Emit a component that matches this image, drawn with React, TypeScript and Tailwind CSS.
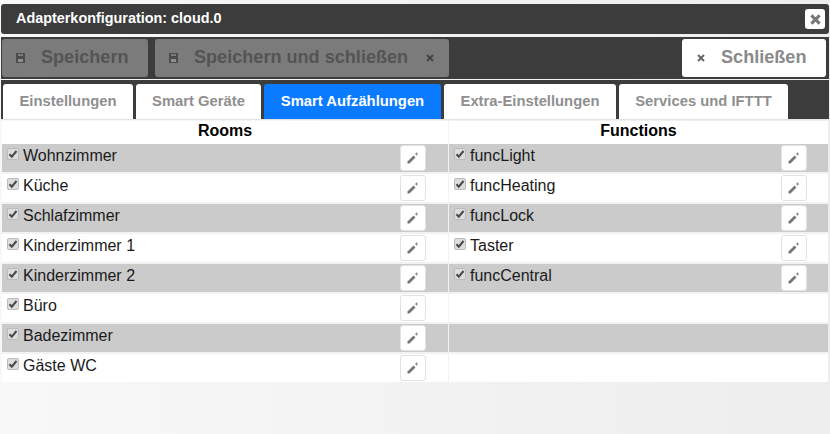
import React from 'react';

const rooms = ['Wohnzimmer', 'Küche', 'Schlafzimmer', 'Kinderzimmer 1', 'Kinderzimmer 2', 'Büro', 'Badezimmer', 'Gäste WC'];
const functions = ['funcLight', 'funcHeating', 'funcLock', 'Taster', 'funcCentral', '', '', ''];
const tabs = ['Einstellungen', 'Smart Geräte', 'Smart Aufzählungen', 'Extra-Einstellungen', 'Services und IFTTT'];
const tabWidths = ['w-[130px]', 'w-[125px]', 'w-[177px]', 'w-[172px]', 'w-[169px]'];

const SaveIcon = () => (
  <svg width="9" height="10" viewBox="0 0 9 10" className="shrink-0">
    <path fill="#4c4c4c" d="M0 0h9v10H0z" />
    <path fill="#7b7b7b" d="M2 1h5v2H2z" />
    <path fill="#8f8f8f" d="M2 6h5v3H2z" />
  </svg>
);

const CloseIcon = ({ size = 8, color = '#555', weight = 2 }: { size?: number; color?: string; weight?: number }) => (
  <svg width={size} height={size} viewBox="0 0 8 8" className="shrink-0">
    <path d="M1 1l6 6M7 1L1 7" stroke={color} strokeWidth={weight} />
  </svg>
);

const PencilIcon = () => (
  <svg width="12" height="12" viewBox="0 0 12 12">
    <path d="M0.500 9.500l6-6 2 2-6 6H0.500z" fill="#777" />
    <path d="M9.500 0.500v3M8 2h3" stroke="#888" strokeWidth="1" />
  </svg>
);

const CheckMark = () => (
  <span className="w-[12px] h-[12px] mt-[4px] shrink-0 rounded-[2px] border border-[#bbbbbb] bg-[#dddddd] flex items-center justify-center">
    <svg width="10" height="10" viewBox="0 0 10 10">
      <path d="M1.500 5.200l2.300 2.500 4.700-5.700" fill="none" stroke="#484848" strokeWidth="2" />
    </svg>
  </span>
);

const Row = ({ label, shaded, editMargin, last }: { label: string; shaded: boolean; editMargin: string; last: boolean }) => (
  <div className={`flex items-start ${last ? 'h-[28px]' : 'h-[30px] border-b-2 border-[#f2f2f2]'} ${shaded ? 'bg-[#cbcbcb]' : 'bg-white'}`}>
    {label && (
      <>
        <div className="flex items-start gap-[4px] pl-[5px] h-[24px]">
          <CheckMark />
          <span className="text-[16px] leading-[24px] text-[#1a1a1a]">{label}</span>
        </div>
        <button className={`w-[26px] h-[26px] mt-[1px] ml-auto ${editMargin} rounded-[3px] border border-[#e2e2e2] bg-white flex items-center justify-center`}>
          <PencilIcon />
        </button>
      </>
    )}
  </div>
);

export default function App() {
  return (
    <div className="w-[830px] h-[434px] overflow-hidden bg-gradient-to-r from-[#f8f8f8] to-[#ededed] font-['Liberation_Sans',Arial,sans-serif] pt-[4px] px-[1px]">
      <div className="h-[30px] mb-[3px] bg-[#3c3c3c] rounded-[3px] flex items-center justify-between pl-[15px] pr-[4px]">
        <span className="text-[14.4px] font-bold text-white">Adapterkonfiguration: cloud.0</span>
        <button className="w-[20px] h-[20px] bg-white rounded-[3px] flex items-center justify-center">
          <CloseIcon size={11} color="#777" weight={2.200} />
        </button>
      </div>

      <div className="h-[42px] mb-[1px] bg-[#3c3c3c] flex items-center gap-[7px] px-[1px] pr-[3px]">
        <button className="w-[146px] h-[38px] rounded-[3px] bg-[#7b7b7b] flex items-center pl-[14px] gap-[16px] text-[18.100px] font-bold text-[#545454]">
          <SaveIcon />
          Speichern
        </button>
        <button className="w-[294px] h-[38px] rounded-[3px] bg-[#7b7b7b] flex items-center pl-[14px] gap-[16px] text-[18.100px] font-bold text-[#545454]">
          <SaveIcon />
          Speichern und schließen
          <span className="ml-[2px]"><CloseIcon color="#444" /></span>
        </button>
        <button className="w-[144px] h-[38px] ml-auto rounded-[3px] bg-white flex items-center pl-[15px] gap-[16px] text-[18.100px] font-bold text-[#8a8a8a]">
          <CloseIcon color="#666" />
          Schließen
        </button>
      </div>

      <div className="h-[40px] bg-[#3c3c3c] flex items-end gap-[3px] pl-[2px] border-b border-[#e2e2e2]">
        {tabs.map((tab, i) => (
          <div
            key={tab}
            className={`${tabWidths[i]} h-[35px] rounded-t-[3px] flex items-center justify-center text-[14.800px] font-bold ${i === 2 ? 'bg-[#0a7bff] text-white' : 'bg-white text-[#8f8f8f]'}`}
          >
            {tab}
          </div>
        ))}
      </div>

      <div className="flex gap-[1px] pl-[1px] pt-[1px]">
        <div className="w-[446px]">
          <div className="h-[23px] bg-white text-center text-[16px] leading-[20px] font-bold text-black">Rooms</div>
          {rooms.map((room, i) => (
            <Row key={room} label={room} shaded={i % 2 === 0} editMargin="mr-[22px]" last={i === 7} />
          ))}
        </div>
        <div className="w-[379px]">
          <div className="h-[23px] bg-white text-center text-[16px] leading-[20px] font-bold text-black">Functions</div>
          {functions.map((fn, i) => (
            <Row key={i} label={fn} shaded={i % 2 === 0} editMargin="mr-[21px]" last={i === 7} />
          ))}
        </div>
      </div>
    </div>
  );
}
